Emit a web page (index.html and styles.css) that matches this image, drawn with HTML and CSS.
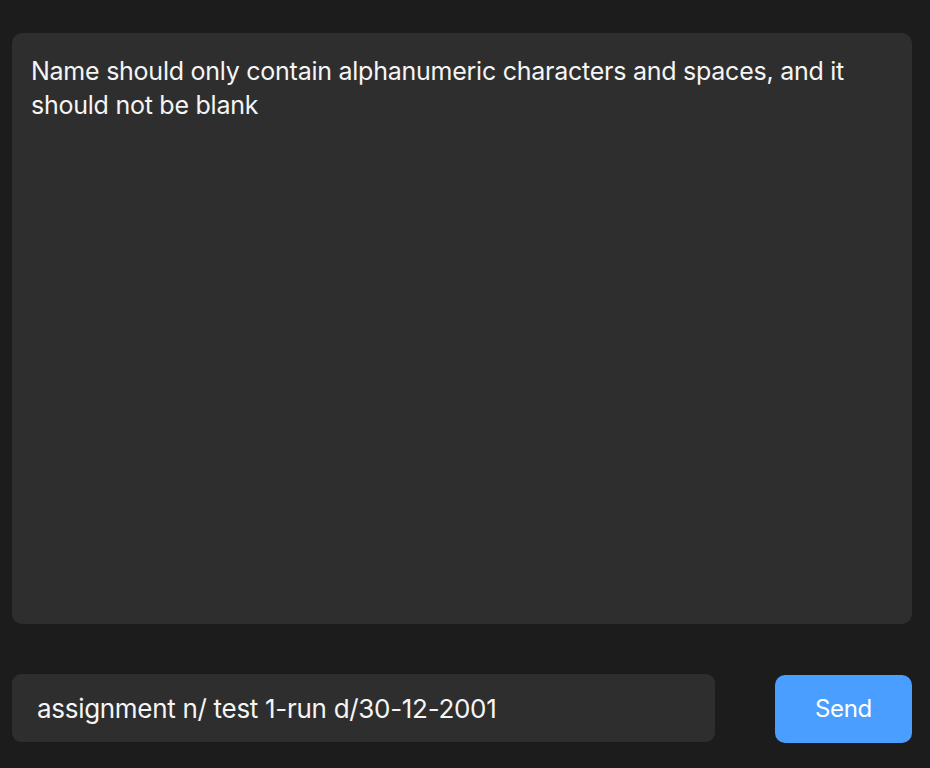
FILE: index.html
```html
<!DOCTYPE html>
<html>
<head>
<meta charset="utf-8">
<link rel="stylesheet" href="styles.css">
</head>
<body>
<div class="app">
  <div class="output">Name should only contain alphanumeric characters and spaces, and it should not be blank</div>
  <div class="bar">
    <div class="input">assignment n/ test 1-run d/30-12-2001</div>
    <button class="send">Send</button>
  </div>
</div>
</body>
</html>
```
FILE: styles.css
```css
html, body {
  margin: 0;
  padding: 0;
  background: #1c1c1c;
  height: 100%;
}
.app {
  box-sizing: border-box;
  width: 930px;
  height: 768px;
  padding: 33px 18px 25px 12px;
  display: flex;
  flex-direction: column;
  font-family: Inter, "Noto Sans", sans-serif;
  color: #f5f5f5;
}
.output {
  height: 591px;
  box-sizing: border-box;
  background: #2e2e2e;
  border-radius: 10px;
  padding: 21px 30px 0 19px;
  font-size: 25px;
  line-height: 34px;
  letter-spacing: -0.25px;
}
.bar {
  margin-top: 50px;
  display: flex;
  align-items: flex-start;
  gap: 60px;
}
.input {
  width: 703px;
  height: 68px;
  box-sizing: border-box;
  background: #2e2e2e;
  border-radius: 9px;
  padding: 0 25px;
  display: flex;
  align-items: center;
  font-size: 26px;
  letter-spacing: -0.3px;
}
.send {
  margin-top: 1px;
  width: 137px;
  height: 68px;
  border: none;
  border-radius: 10px;
  background: #4a9eff;
  color: #ffffff;
  font-family: Inter, "Noto Sans", sans-serif;
  font-size: 24px;
  letter-spacing: -0.3px;
  padding: 0 0 2px;
}
```
